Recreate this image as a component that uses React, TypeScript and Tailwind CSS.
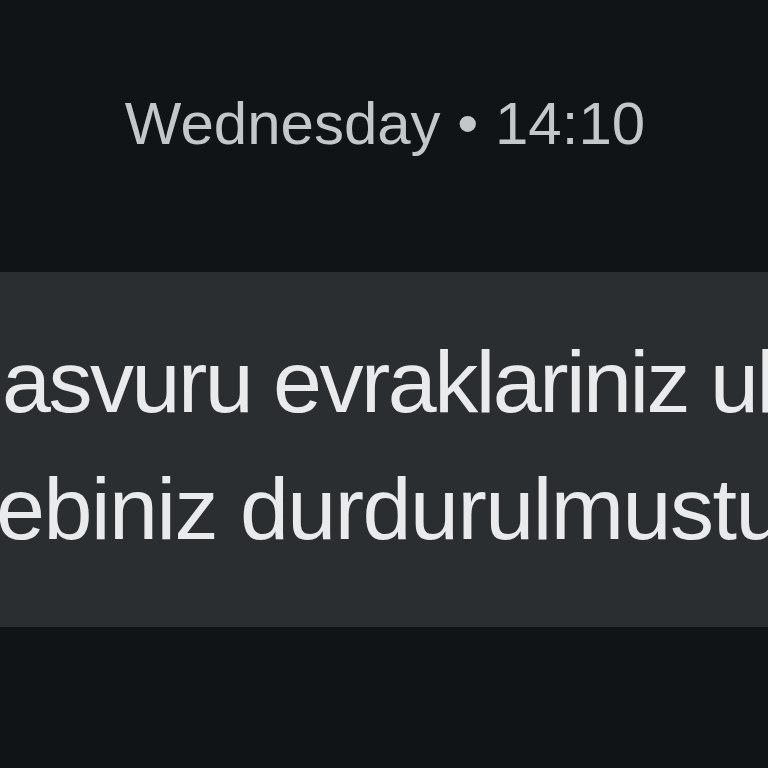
export default function App() {
  return (
    <div
      className="h-screen w-full overflow-hidden bg-[#111417] flex flex-col"
      style={{ fontFamily: '"Liberation Sans", Arial, sans-serif' }}
    >
      {/* Date / time header */}
      <div className="h-[272px] pt-[94px] flex justify-center">
        <span className="text-[60px] leading-none text-[#c4c7c9] pl-[2px]">
          Wednesday • 14:10
        </span>
      </div>

      {/* Message bubble */}
      <div className="h-[355px] bg-[#2b2e31] pt-[46px] overflow-hidden">
        <div className="text-[88px] leading-[127px] text-[#e8eaec] whitespace-nowrap">
          <div className="pl-[2px] tracking-[-2.5px]">asvuru evraklariniz ul</div>
          <div className="-ml-[4px] tracking-[-1.5px]">ebiniz durdurulmustur</div>
        </div>
      </div>
    </div>
  );
}
